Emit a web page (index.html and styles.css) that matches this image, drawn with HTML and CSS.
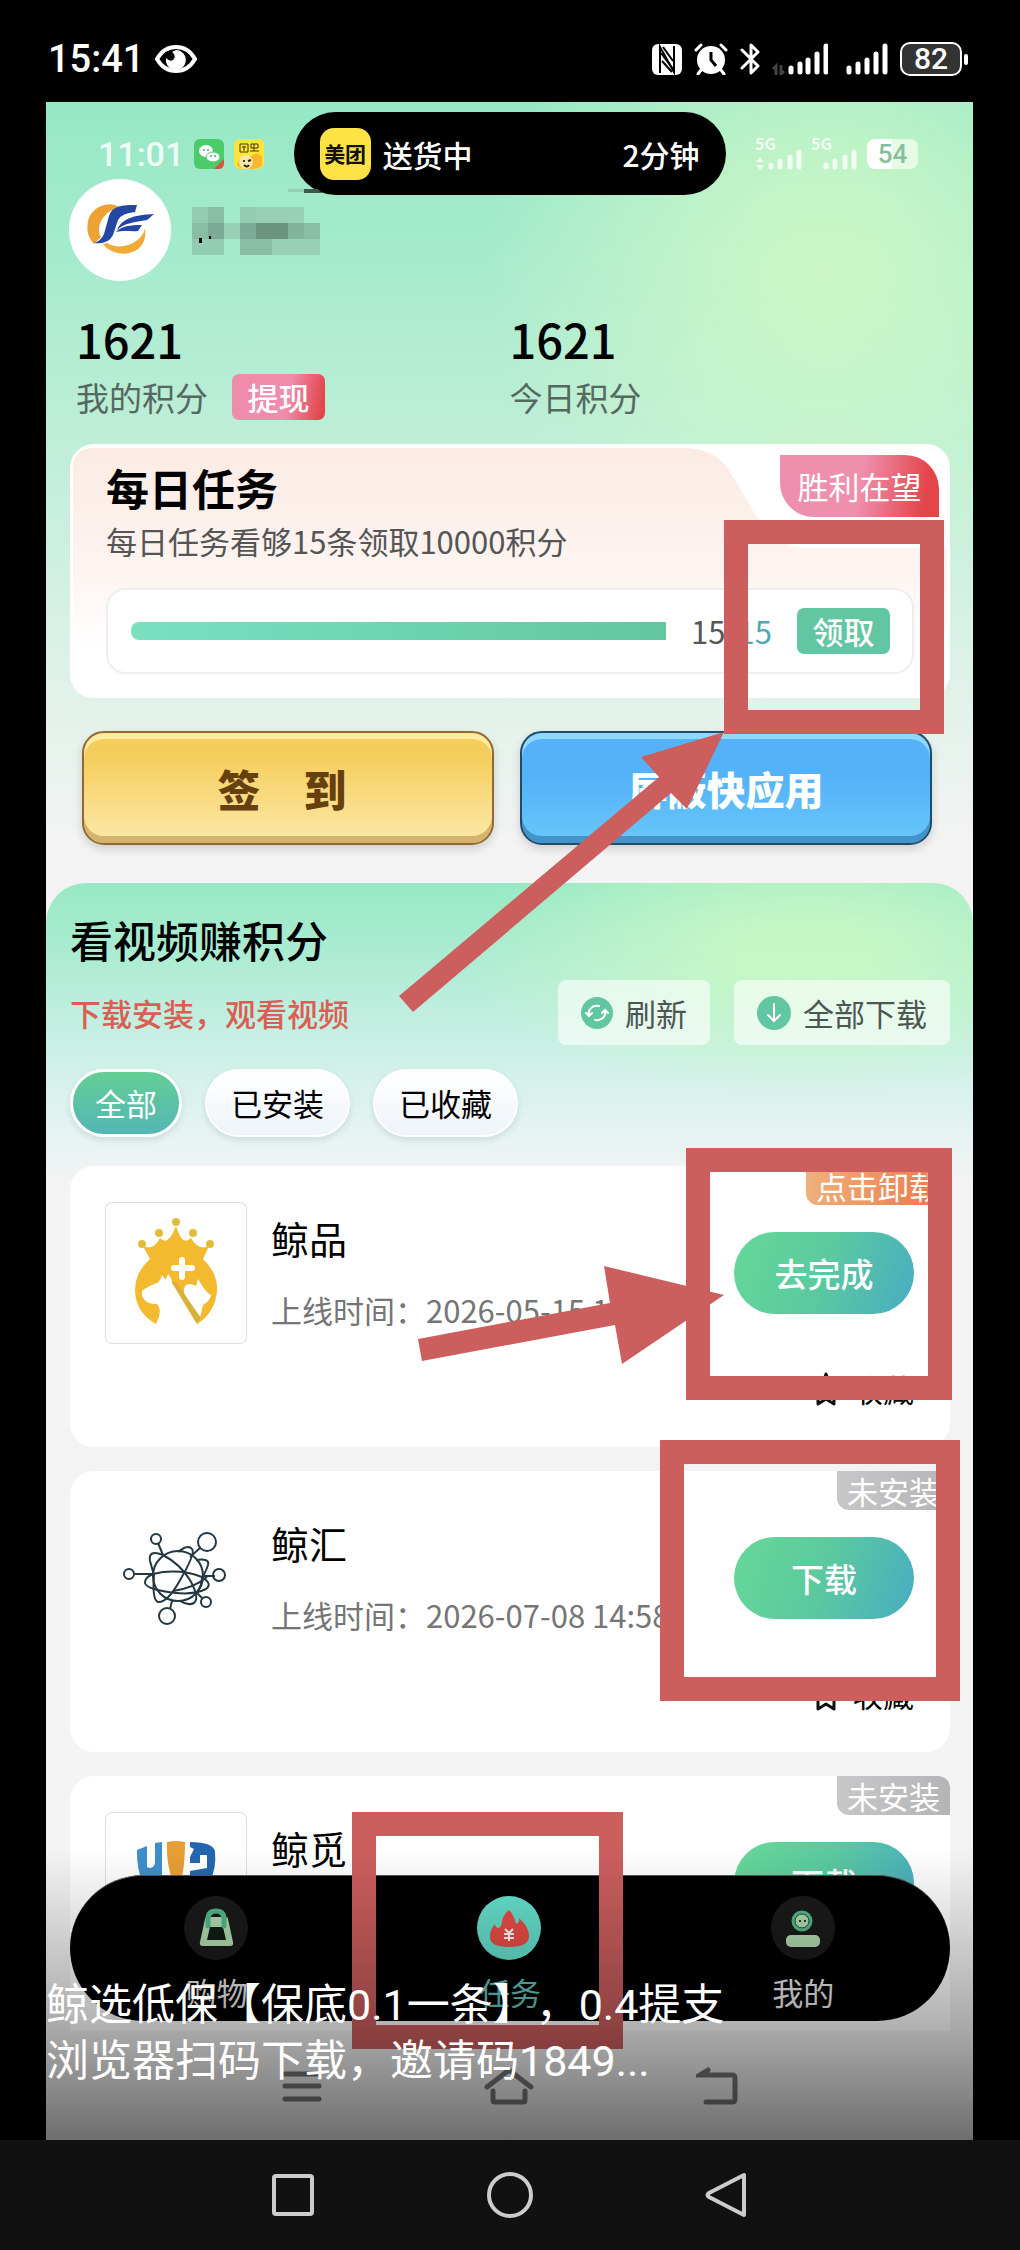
FILE: index.html
```html
<!DOCTYPE html>
<html lang="zh-CN">
<head>
    <meta charset="UTF-8">
    <meta name="viewport" content="width=device-width, initial-scale=1.0">
    <title>看视频赚积分</title>
    <link rel="stylesheet" href="styles.css">
</head>
<body>
    <header class="phone-status">
        <div class="status-left">
            <span class="phone-time">15:41</span>
            <svg width="44" height="32" viewBox="0 0 44 32">
                <path d="M3 16C12 0 32 0 41 16C32 32 12 32 3 16Z" fill="none" stroke="#fff" stroke-width="4"/>
                <path d="M22 7A10 10 0 1 1 12 15Q17 20 20 16Q22 12 18 9Z" fill="#fff"/>
            </svg>
        </div>
        <div class="status-right">
            <svg width="30" height="31" viewBox="0 0 30 31">
                <rect width="30" height="31" rx="6" fill="#fff"/>
                <path d="M8 29V3L22 28V2" fill="none" stroke="#000" stroke-width="2"/>
                <path d="M9 9L21 25M10 17L20 28M11 3L21 17" stroke="#000" stroke-width="2"/>
            </svg>
            <svg width="34" height="32" viewBox="0 0 34 32">
                <circle cx="17" cy="17" r="14" fill="#fff"/>
                <path d="M2 7L7 2M32 7L27 2M7 27L4 31M27 27L30 31" stroke="#fff" stroke-width="3" stroke-linecap="round"/>
                <path d="M17 9V17L22 23" fill="none" stroke="#000" stroke-width="3"/>
            </svg>
            <svg width="20" height="32" viewBox="0 0 20 32">
                <path d="M2 7L18 23L11 30V2L18 9L2 25" fill="none" stroke="#fff" stroke-width="3" stroke-linejoin="round" stroke-linecap="round"/>
            </svg>
            <svg width="56" height="32" viewBox="0 0 56 32">
                <path d="M4 32V23L1 26M9 22V31L12 28" fill="none" stroke="#444" stroke-width="3"/>
                <path d="M19 29V25M28 29V21M36 29V17M45 29V11M54 29V3" stroke="#fff" stroke-width="5" stroke-linecap="round"/>
            </svg>
            <svg class="signal-two" width="42" height="32" viewBox="0 0 42 32">
                <path d="M3 29V25M12 29V21M21 29V17M30 29V11M39 29V3" stroke="#fff" stroke-width="5" stroke-linecap="round"/>
            </svg>
            <span class="phone-battery">82</span>
        </div>
    </header>

    <main class="screen">
        <div class="content">
            <div class="app-status">
                <div class="app-status-left">
                    <span class="app-time">11:01</span>
                    <svg width="30" height="30" viewBox="0 0 30 30">
                        <rect width="30" height="30" rx="6" fill="#4ccb6b"/>
                        <ellipse cx="12" cy="12" rx="7" ry="6" fill="#fff"/>
                        <ellipse cx="19" cy="18" rx="7" ry="5" fill="#fff" stroke="#4ccb6b"/>
                        <circle cx="10" cy="11" r="1" fill="#4a8"/><circle cx="14" cy="11" r="1" fill="#4a8"/>
                        <circle cx="17" cy="17" r="1" fill="#4a8"/><circle cx="21" cy="17" r="1" fill="#4a8"/>
                        <path d="M30 20V24Q30 30 24 30H20Z" fill="#d9533f"/>
                    </svg>
                    <svg width="30" height="30" viewBox="0 0 30 30">
                        <rect width="30" height="30" rx="6" fill="#fde43b"/>
                        <path d="M3 26Q6 15 15 18Q24 12 28 18V27Q24 30 15 30Q6 30 3 26Z" fill="#fbb730"/>
                        <circle cx="12" cy="23" r="7" fill="#ffe9a0"/>
                        <path d="M6 5H14V13H6ZM8 8H12M10 7V12M17 5H24V9H17ZM16 12H25M20 5V12" fill="none" stroke="#443b10" stroke-width="1"/>
                        <circle cx="10" cy="22" r="1"/><path d="M14 22L17 21M10 26Q13 29 15 26" fill="none" stroke="#222" stroke-width="2"/>
                    </svg>
                </div>
                <div class="island">
                    <span class="island-logo">美团</span>
                    <span>送货中</span>
                    <span class="island-time">2分钟</span>
                </div>
                <div class="app-status-right">
                    <div class="signal">
                        <span class="signal-type">5G</span>
                        <svg width="48" height="22" viewBox="0 0 48 22">
                            <path d="M1 14L5 9L9 14ZM1 17L5 22L9 17Z" fill="#fff"/>
                            <path d="M16 19V17M25 19V13M35 19V9M44 19V4" stroke="#fff" stroke-width="5" stroke-linecap="round"/>
                        </svg>
                    </div>
                    <div class="signal">
                        <span class="signal-type">5G</span>
                        <svg width="48" height="22" viewBox="0 0 48 22">
                            <path d="M15 19V17M24 19V13M34 19V9M43 19V4" stroke="#fff" stroke-width="5" stroke-linecap="round"/>
                        </svg>
                    </div>
                    <span class="app-battery">54</span>
                </div>
            </div>

            <div class="profile">
                <div class="avatar">
                    <svg width="70" height="60" viewBox="0 0 70 60">
                        <path d="M34 7C24 0 6 7 3 21C1 32 4 38 9 44L16 37C11 29 15 13 34 7Z" fill="#eda233"/>
                        <path d="M18 44C30 60 64 57 60 28C58 42 36 52 22 43Z" fill="#efab35"/>
                        <path d="M52 5C36 5 27 6 24 16L19 34Q16 41 9 43Q23 45 28 35L33 20Q37 13 50 12Z" fill="#2447a5"/>
                        <path d="M69 14C50 15 37 18 32 30C39 23 50 22 62 20Z" fill="#2447a5"/>
                        <path d="M57 25C45 25 36 26 31 32C40 30 46 32 53 31Z" fill="#2447a5"/>
                    </svg>
                </div>
                <svg class="nickname" width="130" height="82" viewBox="0 0 130 82">
                    <path d="M0 18H16V34H0ZM48 18H64V34H48ZM0 50H32V66H0Z" fill="#92ccb2"/>
                    <path d="M16 18H32V34H16ZM0 34H16V50H0ZM112 34H128V50H112ZM48 50H80V66H48Z" fill="#89bda4"/>
                    <path d="M64 18H112V34H64ZM32 34H48V50H32ZM80 50H128V66H80ZM96 0H112V3H96Z" fill="#98d0b7"/>
                    <path d="M16 34H32V50H16ZM48 34H64V50H48Z" fill="#7cac97"/>
                    <path d="M64 34H80V50H64ZM80 34H96V50H80Z" fill="#6c9380"/>
                    <path d="M96 34H112V50H96Z" fill="#82b49c"/>
                    <path d="M7 49H10V54H7ZM17 47H19V50H17Z" fill="#000"/>
                    <path d="M112 0H126L130 4H112Z" fill="#41574c"/>
                </svg>
            </div>

            <div class="stats">
                <div class="stat">
                    <strong class="stat-value">1621</strong>
                    <div class="stat-row">
                        <span>我的积分</span>
                        <button class="btn-small btn-withdraw" type="button">提现</button>
                    </div>
                </div>
                <div class="stat">
                    <strong class="stat-value">1621</strong>
                    <div class="stat-row"><span>今日积分</span></div>
                </div>
            </div>

            <section class="daily">
                <svg class="daily-bg" viewBox="0 0 880 254" preserveAspectRatio="none">
                    <defs>
                        <linearGradient id="peach" x1="0" y1="0" x2="0" y2="1">
                            <stop offset="0" stop-color="#fbebe4"/>
                            <stop offset="0.5" stop-color="#fdf4f1"/>
                            <stop offset="0.8" stop-color="#fff"/>
                        </linearGradient>
                    </defs>
                    <path d="M3 24Q3 4 24 4H610C650 4 656 22 670 44C690 80 704 104 740 104H877V254H3Z" fill="url(#peach)"/>
                </svg>
                <span class="daily-badge">胜利在望</span>
                <h2 class="daily-title">每日任务</h2>
                <p class="daily-desc">每日任务看够15条领取10000积分</p>
                <div class="progress-box">
                    <div class="progress"></div>
                    <span class="progress-count">15/<span class="progress-total">15</span></span>
                    <button class="btn-small btn-claim" type="button">领取</button>
                </div>
            </section>

            <div class="big-buttons">
                <button class="big-btn big-btn-gold" type="button">签　到</button>
                <button class="big-btn big-btn-blue" type="button">屏蔽快应用</button>
            </div>

            <section class="videos">
                <h2 class="videos-title">看视频赚积分</h2>
                <div class="toolbar">
                    <p class="toolbar-tip">下载安装，观看视频</p>
                    <button class="tool-btn" type="button">
                        <svg width="32" height="32" viewBox="0 0 32 32">
                            <circle cx="16" cy="16" r="16" fill="#62c6a3"/>
                            <path d="M8 18V14Q11 8 18 9M24 14V18Q21 24 14 23M5 16L8 19L11 16M21 16L24 13L27 16" fill="none" stroke="#fff" stroke-width="2" stroke-linecap="round"/>
                        </svg>
                        刷新
                    </button>
                    <button class="tool-btn" type="button">
                        <svg width="34" height="34" viewBox="0 0 34 34">
                            <circle cx="17" cy="17" r="17" fill="#62c6a3"/>
                            <path d="M17 8V24M11 19L17 25L23 19" fill="none" stroke="#fff" stroke-width="2" stroke-linecap="round"/>
                        </svg>
                        全部下载
                    </button>
                </div>
                <div class="filters">
                    <button class="filter active" type="button">全部</button>
                    <button class="filter" type="button">已安装</button>
                    <button class="filter" type="button">已收藏</button>
                </div>

                <div class="app-list">
                    <article class="app-card">
                        <span class="tag tag-orange">点击卸载</span>
                        <div class="app-icon app-icon-border">
                            <svg width="140" height="140" viewBox="0 0 140 140">
                                <path d="M44 56L37 43Q48 48 54 35Q62 44 70 23Q76 44 85 35Q92 48 103 43L97 56Q112 70 111 88Q109 110 91 121L56 72Q54 81 44 84Q37 87 36 93Q42 97 52 101Q57 108 50 121Q30 110 29 88Q29 69 44 56Z" fill="#f3b92f"/>
                                <path d="M64 73L66 72L97 112L91 121Z" fill="#f3b92f"/>
                                <path d="M78 86Q80 78 90 83L92 76L97 84Q101 90 105 92Q104 98 97 102L94 115Q83 102 78 90Z" fill="#fff"/>
                                <path d="M36 88Q42 83 51 80L58 80L62 71Q66 75 66 80L91 121H50Q57 107 51 101Q40 102 36 93Z" fill="#fff"/>
                                <path d="M66 79L91 121L95 115L70 79Z" fill="#d8b13a"/>
                                <path d="M76 57V74M68 65H86" stroke="#fff" stroke-width="6" stroke-linecap="round"/>
                                <g fill="#dfbd3a">
                                    <circle cx="36" cy="41" r="4"/><circle cx="53" cy="30" r="4"/><circle cx="70" cy="19" r="4"/>
                                    <circle cx="87" cy="30" r="4"/><circle cx="104" cy="41" r="4"/>
                                </g>
                            </svg>
                        </div>
                        <div class="app-info">
                            <h3 class="app-name">鲸品</h3>
                            <p class="app-date">上线时间：2026-05-15 14:20</p>
                        </div>
                        <div class="app-actions">
                            <button class="btn-go" type="button">去完成</button>
                            <button class="fav" type="button">
                                <svg width="27" height="37" viewBox="0 0 27 37">
                                    <path d="M13 3L17 12L25 15L21 21V33L13 28L5 33V21L2 15L10 12Z" fill="none" stroke="#111" stroke-width="3" stroke-linejoin="round"/>
                                </svg>
                                收藏
                            </button>
                        </div>
                    </article>

                    <article class="app-card">
                        <span class="tag">未安装</span>
                        <div class="app-icon">
                            <svg width="140" height="140" viewBox="0 0 140 140" fill="none" stroke="#233743" stroke-width="2">
                                <circle cx="72" cy="68" r="25"/>
                                <path d="M47 66Q72 60 96 69Q107 76 100 81Q86 88 62 84Q38 80 39 74Q40 68 48 66M101 69Q88 80 67 83"/>
                                <path d="M57 47Q42 41 44 53Q46 60 48 67Q46 92 52 94Q61 95 73 74Q90 45 86 41Q82 36 72 44"/>
                                <path d="M57 47Q74 56 84 72Q94 90 88 95Q82 98 74 93M90 52Q104 50 102 57Q99 66 96 69Q96 78 91 84"/>
                                <path d="M57 47L52 35M84 49L94 40M47 66H29M98 68H109M90 84L97 91M66 93L64 101"/>
                                <circle cx="50" cy="31" r="5"/><circle cx="101" cy="34" r="9"/><circle cx="23" cy="66" r="5"/>
                                <circle cx="113" cy="67" r="6"/><circle cx="100" cy="94" r="5"/><circle cx="61" cy="108" r="8"/>
                            </svg>
                        </div>
                        <div class="app-info">
                            <h3 class="app-name">鲸汇</h3>
                            <p class="app-date">上线时间：2026-07-08 14:58</p>
                        </div>
                        <div class="app-actions">
                            <button class="btn-go" type="button">下载</button>
                            <button class="fav" type="button">
                                <svg width="27" height="37" viewBox="0 0 27 37">
                                    <path d="M13 3L17 12L25 15L21 21V33L13 28L5 33V21L2 15L10 12Z" fill="none" stroke="#111" stroke-width="3" stroke-linejoin="round"/>
                                </svg>
                                收藏
                            </button>
                        </div>
                    </article>

                    <article class="app-card">
                        <span class="tag">未安装</span>
                        <div class="app-icon app-icon-border">
                            <svg width="140" height="140" viewBox="0 0 140 140">
                                <path d="M31 37L41 33V54Q47 57 49 50V30L56 29V90Q30 75 31 37Z" fill="#3d8fca"/>
                                <path d="M61 29Q70 27 79 29Q79 64 71 76Q60 58 61 29Z" fill="#e79f35"/>
                                <path d="M84 29Q108 29 109 39Q112 70 84 92V58L101 55V42H94V50H84V44L88 36L84 34Z" fill="#2466ae"/>
                            </svg>
                        </div>
                        <div class="app-info">
                            <h3 class="app-name">鲸觅</h3>
                        </div>
                        <div class="app-actions">
                            <button class="btn-go" type="button">下载</button>
                        </div>
                    </article>
                </div>
            </section>

            <nav class="tabbar">
                <a class="tab" href="#">
                    <svg width="65" height="65" viewBox="0 0 65 65">
                        <circle cx="32" cy="32" r="32" fill="#1a1a1b"/>
                        <path d="M21 23Q21 21 24 21H42Q44 21 44 23L49 46Q50 50 46 50H19Q15 50 16 46Z" fill="#b2deb1"/>
                        <path d="M26 31H39L42 44H23Z" fill="#121d16"/>
                        <path d="M24 30V23Q24 15 32 15Q40 15 40 23V30" fill="none" stroke="#52ba8a" stroke-width="5" stroke-linecap="round"/>
                    </svg>
                    购物
                </a>
                <a class="tab tab-active" href="#">
                    <svg width="65" height="65" viewBox="0 0 65 65">
                        <circle cx="32" cy="32" r="32" fill="#66e2cf"/>
                        <path d="M32 14Q37 19 39 28Q43 27 42 22Q52 31 52 40Q52 51 32 51Q12 51 13 40Q13 34 18 28Q18 32 22 32Q25 30 25 25Q26 19 32 14Z" fill="#ec4d46"/>
                        <path d="M28 33L32 37L36 33M32 37V45M27 38H37M27 42H37" fill="none" stroke="#fff" stroke-width="2"/>
                    </svg>
                    任务
                </a>
                <a class="tab" href="#">
                    <svg width="65" height="65" viewBox="0 0 65 65">
                        <circle cx="32" cy="32" r="32" fill="#1a1a1b"/>
                        <circle cx="31" cy="25" r="9" fill="#b2deb1" stroke="#52ba8a" stroke-width="3"/>
                        <circle cx="31" cy="25" r="7" fill="none" stroke="#12402c" stroke-width="1"/>
                        <circle cx="29" cy="25" r="1"/><circle cx="34" cy="25" r="1"/>
                        <rect x="15" y="39" width="34" height="12" rx="5" fill="#b2deb1"/>
                    </svg>
                    我的
                </a>
            </nav>
        </div>

        <div class="inner-nav">
            <svg width="40" height="36" viewBox="0 0 40 36"><path d="M3 6H37M3 18H37M3 31H37" stroke="#777" stroke-width="5" stroke-linecap="round"/></svg>
            <svg width="50" height="38" viewBox="0 0 50 38"><path d="M3 20L25 3L47 20M9 24V33Q9 35 11 35H39Q41 35 41 33V24" fill="none" stroke="#777" stroke-width="5" stroke-linecap="round"/></svg>
            <svg width="42" height="38" viewBox="0 0 42 38"><path d="M12 3L4 8H36Q39 8 39 11V32Q39 35 36 35H10" fill="none" stroke="#777" stroke-width="5" stroke-linecap="round"/></svg>
        </div>

        <!-- red frames and arrows -->
        <svg class="marks" viewBox="46 102 927 2038" preserveAspectRatio="none">
            <g fill="none" stroke="#cc5e5e" stroke-width="24">
                <rect x="736" y="532" width="196" height="190"/>
                <rect x="698" y="1160" width="242" height="228"/>
                <rect x="672" y="1452" width="276" height="237"/>
                <rect x="364" y="1824" width="247" height="213"/>
            </g>
            <path d="M399 996L659 777L641 757L724 732L687 809L671 793L413 1012Z" fill="#cc5e5e"/>
            <path d="M418 1339L610 1303L604 1266L724 1295L622 1364L615 1325L422 1361Z" fill="#cc5e5e"/>
        </svg>
        <div class="shade"></div>
        <p class="caption">鲸选低保【保底0.1一条】，0.4提支<br>浏览器扫码下载，邀请码1849...</p>
    </main>

    <footer class="phone-nav">
        <svg width="44" height="46" viewBox="0 0 44 46"><rect x="3" y="4" width="38" height="38" rx="2" fill="none" stroke="#ccc" stroke-width="4"/></svg>
        <svg width="46" height="46" viewBox="0 0 46 46"><circle cx="23" cy="23" r="21" fill="none" stroke="#ccc" stroke-width="4"/></svg>
        <svg width="44" height="46" viewBox="0 0 44 46"><path d="M39 3V43L4 25Q1 23 4 21Z" fill="none" stroke="#ccc" stroke-width="4" stroke-linejoin="round"/></svg>
    </footer>
</body>
</html>
```
FILE: styles.css
```css
* {
    box-sizing: border-box;
}

body {
    margin: 0;
    height: 100vh;
    display: flex;
    flex-direction: column;
    background: #000;
    font-family: "Noto Sans CJK SC", sans-serif;
    font-size: 31px;
    line-height: 46px;
    color: #000;
}

h2, h3, p {
    margin: 0;
}

button {
    border: 0;
    padding: 0;
    background: none;
    font: inherit;
    color: inherit;
}

svg {
    flex-shrink: 0;
}

/* outer status bar */
.phone-status {
    height: 102px;
    padding: 16px 58px 0 48px;
    display: flex;
    align-items: center;
    justify-content: space-between;
    flex-shrink: 0;
    color: #fff;
    font-family: Roboto, sans-serif;
}

.status-left,
.status-right {
    display: flex;
    align-items: center;
    gap: 12px;
}

.status-left {
    gap: 10px;
}

.signal-two {
    margin-left: 6px;
}

.phone-time {
    font-size: 38px;
    font-weight: 500;
}

.phone-battery {
    position: relative;
    width: 62px;
    height: 34px;
    border: 2px solid #fff;
    border-radius: 10px;
    background: #333;
    font-size: 30px;
    font-weight: 500;
    line-height: 30px;
    text-align: center;
}

.phone-battery::after {
    content: "";
    position: absolute;
    right: -8px;
    top: 10px;
    width: 4px;
    height: 11px;
    border-radius: 2px;
    background: #fff;
}

/* app screen */
.screen {
    position: relative;
    flex: 1;
    min-height: 0;
    margin: 0 47px 0 46px;
    display: flex;
    flex-direction: column;
    overflow: hidden;
    background: #f4f4f4;
}

.content {
    position: relative;
    flex: 1;
    min-height: 0;
    overflow: hidden;
    background:
        radial-gradient(circle at 780px 170px, rgba(208, 248, 196, 0.9) 0, rgba(205, 248, 198, 0.7) 120px, rgba(190, 240, 200, 0) 340px),
        linear-gradient(#96e8c5 0, #aaebcf 190px, #bdeed8 330px, #e2f2ea 600px, #f3f3f3 740px);
}

.app-status {
    padding: 10px 55px 0 52px;
    display: flex;
    align-items: center;
    justify-content: space-between;
}

.app-status-left,
.app-status-right {
    display: flex;
    align-items: center;
    gap: 10px;
}

.app-time {
    font-family: Roboto, sans-serif;
    font-size: 34px;
    font-weight: 500;
    color: #effcf5;
}

.island {
    width: 432px;
    height: 83px;
    padding: 0 26px;
    display: flex;
    align-items: center;
    gap: 12px;
    border-radius: 42px;
    background: #000;
    color: #fff;
    font-size: 30px;
    font-weight: 500;
}

.island-logo {
    width: 51px;
    height: 52px;
    border-radius: 14px;
    background: #ffe345;
    color: #111;
    font-size: 21px;
    font-weight: 700;
    line-height: 50px;
    text-align: center;
}

.island-time {
    margin-left: auto;
}

.signal {
    display: flex;
    flex-direction: column;
    opacity: 0.8;
}

.app-status-right {
    gap: 8px;
}

.signal-type {
    height: 10px;
    font-size: 16px;
    font-weight: 700;
    line-height: 10px;
    color: #fff;
}

.app-battery {
    width: 51px;
    height: 30px;
    border-radius: 8px;
    background: linear-gradient(90deg, #fff 50%, #e6fbe4 50%);
    color: #86bf9d;
    font-family: Roboto, sans-serif;
    font-size: 26px;
    font-weight: 500;
    line-height: 30px;
    text-align: center;
}

.profile {
    margin-top: -16px;
    padding-left: 23px;
    display: flex;
    align-items: center;
    gap: 21px;
}

.avatar {
    width: 102px;
    height: 102px;
    display: flex;
    align-items: center;
    justify-content: center;
    border-radius: 50%;
    background: #fff;
}

.stats {
    padding: 32px 30px 0;
    display: flex;
}

.stat {
    flex: 1;
}

.stat-value {
    display: block;
    font-size: 47px;
    font-weight: 500;
    line-height: 52px;
}

.stat-row {
    margin-top: 9px;
    height: 46px;
    display: flex;
    align-items: center;
    gap: 24px;
    font-size: 33px;
    color: #56685f;
}

.btn-small {
    width: 93px;
    height: 46px;
    border-radius: 7px;
    color: #fff;
    font-size: 31px;
    font-weight: 500;
    line-height: 46px;
}

.btn-withdraw {
    background: linear-gradient(100deg, #ef8bab 60%, #e2464b 95%);
}

.btn-claim {
    background: #62c6a3;
}

/* daily task */
.daily {
    position: relative;
    margin: 24px 23px 0 24px;
    padding: 17px 36px 24px;
    border-radius: 24px;
    background: #fff;
    overflow: hidden;
}

.daily-bg {
    position: absolute;
    left: 0;
    top: 0;
    width: 100%;
    height: 100%;
}

.daily-badge {
    position: absolute;
    right: 11px;
    top: 11px;
    width: 159px;
    height: 62px;
    border-radius: 0 34px 0 34px;
    background: linear-gradient(100deg, #ef8fae 50%, #e2464b 90%);
    color: #fff;
    line-height: 62px;
    text-align: center;
}

.daily-title,
.daily-desc,
.progress-box {
    position: relative;
}

.daily-title {
    font-size: 43px;
    font-weight: 700;
    line-height: 52px;
}

.daily-desc {
    margin-top: 5px;
    color: #555;
}

.progress-box {
    margin-top: 24px;
    height: 86px;
    padding: 0 22px 0 23px;
    display: flex;
    align-items: center;
    gap: 25px;
    border: 2px solid #eee;
    border-radius: 20px;
    background: #fff;
}

.progress {
    flex: 1;
    height: 18px;
    border-radius: 8px 0 0 8px;
    background: linear-gradient(90deg, #7ae0c0, #62c6a0);
}

.progress-count {
    color: #555;
}

.progress-total {
    color: #4fa8b5;
}

/* big buttons */
.big-buttons {
    margin-top: 33px;
    padding: 0 41px 0 36px;
    display: grid;
    grid-template-columns: 1fr 1fr;
    gap: 26px;
}

.big-btn {
    height: 114px;
    border-radius: 22px;
    font-weight: 900;
}

.big-btn-gold {
    padding-right: 12px;
    border: 2px solid #926a31;
    background: linear-gradient(#f5cd5c 20%, #fce9a9);
    box-shadow: inset 0 6px 0 #ffeb9d, inset 0 -7px 0 #d6b36b, 0 4px 10px rgba(0, 0, 0, 0.15);
    color: #67400f;
    font-size: 43px;
}

.big-btn-blue {
    border: 2px solid #1e4c6b;
    background: linear-gradient(#54b2f8 40%, #69c7fb);
    box-shadow: inset 0 6px 0 #90d6ff, inset 0 -7px 0 #4494cc, 0 4px 10px rgba(0, 0, 0, 0.15);
    color: #fff;
    font-size: 39px;
}

/* video list */
.videos {
    margin-top: 38px;
    padding: 30px 23px 0 24px;
    border-radius: 40px 40px 0 0;
    background:
        radial-gradient(ellipse 340px 140px at 760px 70px, rgba(200, 248, 196, 0.9) 20%, rgba(190, 245, 200, 0) 100%),
        linear-gradient(#98e9c5 0, #a8ebd0 60px, #c2efe1 140px, #e6f3f3 250px, #f3f3f3 300px);
}

.videos-title {
    font-size: 43px;
    font-weight: 500;
    line-height: 52px;
}

.toolbar {
    margin-top: 15px;
    display: flex;
    align-items: center;
    gap: 24px;
}

.toolbar-tip {
    flex: 1;
    color: #dc5d52;
    font-weight: 500;
}

.tool-btn {
    height: 65px;
    padding: 0 23px;
    display: flex;
    align-items: center;
    gap: 12px;
    border-radius: 8px;
    background: rgba(255, 255, 255, 0.6);
    color: #4c5653;
}

.filters {
    margin-top: 24px;
    display: flex;
    gap: 23px;
}

.filter {
    height: 68px;
    padding: 0 24px;
    border: 2px solid #fff;
    border-radius: 34px;
    background: linear-gradient(#fff, #eef4f9);
    box-shadow: 0 3px 6px rgba(0, 60, 60, 0.12);
}

.filter.active {
    padding: 0 22px;
    border-width: 3px;
    background: linear-gradient(#64ce95, #54b6b5);
    color: #fff;
}

.app-list {
    margin-top: 29px;
    display: flex;
    flex-direction: column;
    gap: 24px;
}

.app-card {
    position: relative;
    height: 281px;
    padding: 0 36px;
    display: flex;
    gap: 25px;
    border-radius: 24px;
    background: #fff;
}

.tag {
    position: absolute;
    right: 0;
    top: 0;
    height: 39px;
    padding: 0 10px;
    border-radius: 0 12px 0 12px;
    background: linear-gradient(100deg, #c8c8ca, #b4b4b6);
    color: #fff;
    line-height: 39px;
}

.tag-orange {
    background: linear-gradient(100deg, #efb27c, #ec7446);
}

.app-icon {
    width: 140px;
    height: 140px;
    margin-top: 37px;
}

.app-icon svg {
    display: block;
}

.app-icon-border {
    border-radius: 6px;
    box-shadow: 0 0 0 1px #ddd;
}

.app-info {
    flex: 1;
    padding-top: 44px;
}

.app-name {
    font-size: 38px;
    font-weight: 400;
    line-height: 56px;
}

.app-date {
    margin-top: 21px;
    color: #757575;
    white-space: nowrap;
}

.app-actions {
    width: 180px;
    padding-top: 66px;
}

.btn-go {
    width: 100%;
    height: 82px;
    border-radius: 41px;
    background: linear-gradient(110deg, #66d896, #5bc9a0 50%, #48acc2);
    color: #fff;
    font-size: 33px;
    font-weight: 500;
}

.fav {
    margin: 52px 0 0 auto;
    display: flex;
    align-items: center;
    gap: 12px;
}

/* bottom tabs */
.tabbar {
    position: absolute;
    left: 24px;
    right: 23px;
    bottom: 10px;
    height: 146px;
    display: flex;
    border-top: 1px solid #555;
    border-radius: 73px;
    background: #000;
}

.tab {
    flex: 1;
    padding-top: 20px;
    display: flex;
    flex-direction: column;
    align-items: center;
    gap: 8px;
    color: #eee;
    text-decoration: none;
}

.tab-active {
    color: #62c6bb;
}

.inner-nav {
    height: 109px;
    display: flex;
    align-items: center;
    justify-content: center;
    gap: 162px;
}

.marks {
    position: absolute;
    left: 0;
    top: 0;
    width: 100%;
    height: 100%;
    pointer-events: none;
}

.shade {
    position: absolute;
    left: 0;
    right: 0;
    bottom: 0;
    height: 290px;
    background: linear-gradient(rgba(0, 0, 0, 0), rgba(0, 0, 0, 0.31) 62%, rgba(0, 0, 0, 0.55));
    pointer-events: none;
}

.caption {
    position: absolute;
    left: 0;
    bottom: 51px;
    color: #fff;
    font-family: Roboto, "Noto Sans CJK SC", sans-serif;
    font-size: 43px;
    line-height: 56px;
    white-space: nowrap;
    text-spacing-trim: space-all;
}

/* phone keys */
.phone-nav {
    height: 110px;
    display: flex;
    align-items: center;
    justify-content: center;
    gap: 172px;
    flex-shrink: 0;
    background: #111;
}
```
